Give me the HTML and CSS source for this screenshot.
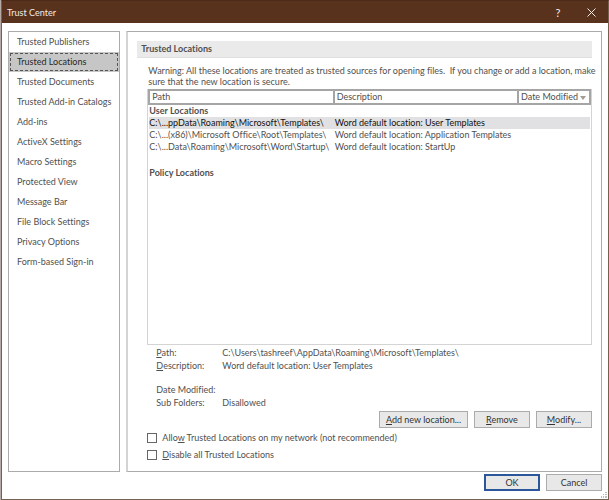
FILE: index.html
```html
<!DOCTYPE html>
<html lang="en">
<head>
  <meta charset="utf-8">
  <title>Trust Center</title>
  <link rel="stylesheet" href="styles.css">
</head>
<body>
  <div class="dialog">
    <header class="titlebar">
      <h1>Trust Center</h1>
      <button type="button" class="title-button">?</button>
      <button type="button" class="title-button" aria-label="Close">
        <svg width="9" height="9" viewBox="0 0 9 9"><path d="M0.5 0.5L8.5 8.5M8.5 0.5L0.5 8.5" fill="none" stroke="currentColor"/></svg>
      </button>
    </header>

    <div class="content">
      <nav class="sidebar">
        <a href="#">Trusted Publishers</a>
        <a href="#" class="active">Trusted Locations</a>
        <a href="#">Trusted Documents</a>
        <a href="#">Trusted Add-in Catalogs</a>
        <a href="#">Add-ins</a>
        <a href="#">ActiveX Settings</a>
        <a href="#">Macro Settings</a>
        <a href="#">Protected View</a>
        <a href="#">Message Bar</a>
        <a href="#">File Block Settings</a>
        <a href="#">Privacy Options</a>
        <a href="#">Form-based Sign-in</a>
      </nav>

      <main class="panel">
        <h2>Trusted Locations</h2>
        <div class="panel-body">
          <p class="warning">Warning: All these locations are treated as trusted sources for opening files.&nbsp; If you change or add a location, make sure that the new location is secure.</p>

          <div class="list">
            <table>
              <thead>
                <tr>
                  <th>Path</th>
                  <th>Description</th>
                  <th class="date">Date Modified <svg width="6" height="4" viewBox="0 0 6 4"><path d="M0 0H6L3 4Z" fill="#a09c98"/></svg></th>
                </tr>
              </thead>
              <tbody>
                <tr class="group"><td colspan="3">User Locations</td></tr>
                <tr class="selected">
                  <td>C:\...ppData\Roaming\Microsoft\Templates\</td>
                  <td>Word default location: User Templates</td>
                  <td></td>
                </tr>
                <tr>
                  <td>C:\...(x86)\Microsoft Office\Root\Templates\</td>
                  <td>Word default location: Application Templates</td>
                  <td></td>
                </tr>
                <tr>
                  <td>C:\...Data\Roaming\Microsoft\Word\Startup\</td>
                  <td>Word default location: StartUp</td>
                  <td></td>
                </tr>
                <tr class="group"><td colspan="3"></td></tr>
                <tr class="group"><td colspan="3">Policy Locations</td></tr>
              </tbody>
            </table>
          </div>

          <dl class="details">
            <dt><u>P</u>ath:</dt>
            <dd>C:\Users\tashreef\AppData\Roaming\Microsoft\Templates\</dd>
            <dt><u>D</u>escription:</dt>
            <dd>Word default location: User Templates</dd>
          </dl>
          <dl class="details">
            <dt>Date Modified:</dt>
            <dd></dd>
            <dt>Sub Folders:</dt>
            <dd>Disallowed</dd>
          </dl>

          <div class="buttons">
            <button type="button" class="btn btn-wide"><u>A</u>dd new location...</button>
            <button type="button" class="btn"><u>R</u>emove</button>
            <button type="button" class="btn"><u>M</u>odify...</button>
          </div>

          <div class="check">
            <input type="checkbox" id="allow-network">
            <label for="allow-network">Allo<u>w</u> Trusted Locations on my network (not recommended)</label>
          </div>
          <div class="check">
            <input type="checkbox" id="disable-all">
            <label for="disable-all"><u>D</u>isable all Trusted Locations</label>
          </div>
        </div>
      </main>
    </div>

    <footer class="footer">
      <button type="button" class="btn btn-default">OK</button>
      <button type="button" class="btn">Cancel</button>
      <svg class="grip" width="6" height="6" viewBox="0 0 6 6"><path d="M4 0h2v1h-2zM2 2h1v1h-1zM4 2h2v1h-2zM0 4h1v2h-1zM2 4h1v2h-1zM4 4h2v2h-2z" fill="#bdbdbd"/></svg>
    </footer>
  </div>
</body>
</html>
```

FILE: styles.css
```css
* {
  box-sizing: border-box;
}

body {
  margin: 0;
  padding-left: 1px;
  background: #b5aaa5;
  font-family: Lato, "Open Sans", sans-serif;
  font-size: 9px;
  font-variant-ligatures: none;
  color: #505050;
}

button, input {
  font: inherit;
}

.dialog {
  display: flex;
  flex-direction: column;
  min-height: 100vh;
  background: #fff;
  border: 1px solid #76614f;
  border-top-color: #4b2b17;
}

/* title bar */
.titlebar {
  display: flex;
  align-items: center;
  height: 22px;
  padding: 0 5px;
  background: #58321c;
  color: #f1ece8;
}

.titlebar h1 {
  flex: 1;
  margin: 0;
  font-size: 9px;
  font-weight: normal;
}

.title-button {
  display: flex;
  align-items: center;
  justify-content: center;
  width: 24px;
  height: 22px;
  margin-left: 9px;
  padding: 0;
  border: none;
  background: none;
  color: inherit;
  font-size: 11px;
}

.content {
  display: flex;
  flex: 1;
  gap: 6px;
  padding: 8px 6px 0;
}

/* category list */
.sidebar {
  flex: 0 0 112px;
  border: 1px solid #ababab;
}

.sidebar a {
  display: block;
  height: 20px;
  padding: 0 8px;
  line-height: 20px;
  color: #505050;
  text-decoration: none;
  white-space: nowrap;
}

.sidebar .active {
  background: #c6c6c6;
  color: #262626;
  outline: 1px dashed #555;
  outline-offset: -2px;
}

/* settings page */
.panel {
  display: flex;
  flex: 1;
  flex-direction: column;
  padding: 9px 9px 8px;
  border: 1px solid #ababab;
  border-left: 2px solid #d4d4d4;
}

.panel h2 {
  margin: 0 0 7px;
  padding: 0 4px;
  background: #eaeaea;
  border-bottom: 1px solid #e0e0e0;
  font-size: 9px;
  line-height: 16px;
}

.panel-body {
  display: flex;
  flex: 1;
  flex-direction: column;
  padding-left: 10px;
}

.warning {
  margin: 0 -8px 2px 0;
  padding-left: 1px;
  line-height: 11px;
}

.list {
  flex: 1;
  border: 1px solid #d4d4d4;
  border-top: none;
}

.list table {
  width: 100%;
  table-layout: fixed;
  border-collapse: collapse;
}

.list th {
  height: 14px;
  padding: 0 2px;
  border: 2px solid #a5a5a5;
  background: #fff;
  font-weight: normal;
  line-height: 10px;
  text-align: left;
  white-space: nowrap;
}

.list .date {
  width: 72px;
}

.list td {
  height: 12px;
  padding: 0 1px;
  line-height: 12px;
  white-space: nowrap;
}

.list td:first-child {
  padding-left: 0;
}

.list .group td {
  height: 13px;
  font-weight: bold;
}

.list .selected {
  background: #e1e1e3;
  color: #111;
}

.details {
  display: grid;
  grid-template-columns: 66px 1fr;
  grid-auto-rows: 13px;
  margin: 0 0 11px;
  padding-left: 9px;
  line-height: 13px;
}

.list + .details {
  margin-top: 1px;
}

.details dd {
  margin: 0;
}

.buttons {
  display: flex;
  justify-content: flex-end;
  gap: 6px;
  margin-top: -9px;
  margin-bottom: 1px;
}

.btn {
  width: 56px;
  height: 17px;
  padding: 0;
  border: 1px solid #ababab;
  background: #e8e8e8;
  color: #333;
  line-height: 13px;
}

.btn-wide {
  width: 89px;
}

.btn-default {
  border: 2px solid #2b579a;
}

.check {
  display: flex;
  align-items: center;
  gap: 5px;
  height: 17px;
}

.check input {
  width: 10px;
  height: 10px;
  margin: 0;
  appearance: none;
  border: 1px solid #666;
  background: #fff;
}

/* bottom bar */
.footer {
  display: flex;
  position: relative;
  justify-content: flex-end;
  gap: 6px;
  padding: 2px 6px 8px;
}

.grip {
  position: absolute;
  right: 1px;
  bottom: 1px;
}
```
